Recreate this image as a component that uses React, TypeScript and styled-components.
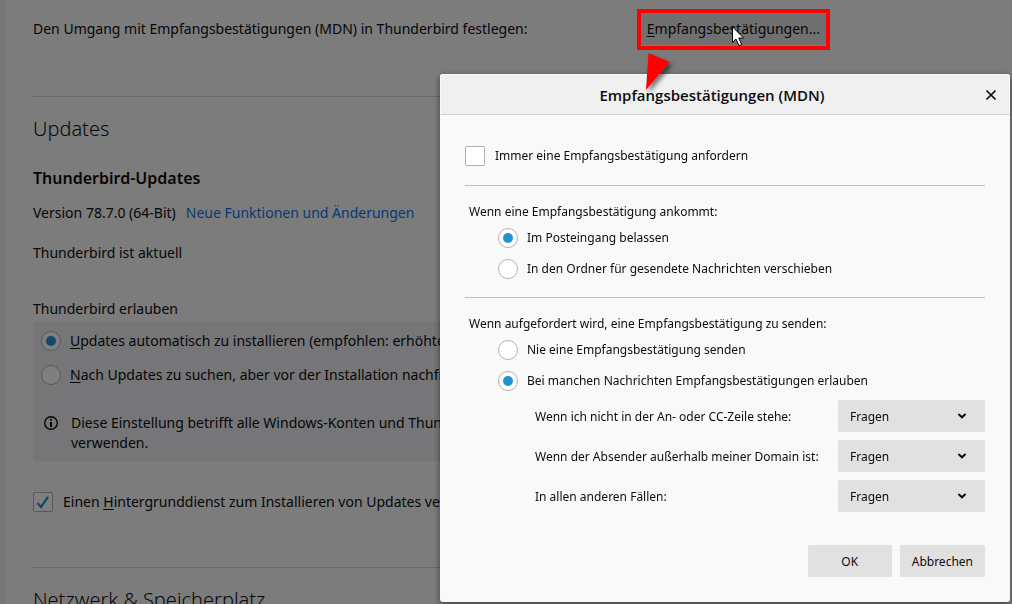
import React from 'react';
import styled, { createGlobalStyle, css } from 'styled-components';

const GlobalStyle = createGlobalStyle`
  *, *::before, *::after { box-sizing: border-box; }
  html, body, #root { height: 100%; }
  body {
    margin: 0;
    overflow: hidden;
    background: #f9f9fa;
    color: #0c0c0d;
    font-family: "Segoe UI", "Noto Sans", "Open Sans", sans-serif;
    font-size: 14px;
    line-height: 20px;
  }
  button, select, input { font: inherit; color: inherit; }
`;

const Page = styled.div`
  display: flex;
  height: 100vh;
  overflow: hidden;
`;

const SidebarEdge = styled.div`
  flex: 0 0 5px;
  background: #ededf0;
`;

const Content = styled.main`
  flex: 1;
  min-width: 0;
  max-width: 821px;
  padding: 13px 0 0 28px;
`;

const SettingRow = styled.div`
  display: flex;
  align-items: center;
  justify-content: space-between;
  margin-bottom: 51px;
`;

const Text = styled.p`
  margin: 0;
`;

const AccessKey = styled.span`
  text-decoration: underline;
  text-underline-offset: 2px;
`;

const Highlighted = styled.div`
  position: relative;
  display: flex;
`;

const HighlightFrame = styled.div`
  position: absolute;
  z-index: 3;
  inset: -4px -4px -5px -4px;
  border: 4px solid #ff0000;
  pointer-events: none;
`;

const HighlightArrow = styled.svg`
  position: absolute;
  z-index: 3;
  top: 40px;
  left: 1px;
  pointer-events: none;
`;

const MousePointer = styled.svg`
  position: absolute;
  z-index: 3;
  top: 13px;
  left: 91px;
  pointer-events: none;
`;

const PageButton = styled.button`
  height: 32px;
  padding: 0 6px;
  border: 0;
  border-radius: 2px;
  background: rgba(12, 12, 13, 0.1);
  white-space: nowrap;
`;

const Divider = styled.hr<{ $dialog?: boolean }>`
  height: 1px;
  margin: 0;
  border: 0;
  background: ${(p) => (p.$dialog ? '#bebebf' : '#d2d2d3')};
`;

const Section = styled.section`
  display: flex;
  flex-direction: column;
  padding: 18px 0 55px;
`;

const SectionTitle = styled.h1`
  margin: 0;
  font-size: 20px;
  font-weight: 300;
  line-height: 28px;
`;

const GroupTitle = styled.h2`
  margin: 24px 0 14px;
  font-size: 16px;
  font-weight: 600;
  line-height: 22px;
`;

const VersionRow = styled.div`
  display: flex;
  gap: 10px;
  margin-bottom: 20px;
`;

const Link = styled.a`
  color: #0a74e6;
  text-decoration: none;
`;

const Fieldset = styled.fieldset`
  min-width: 0;
  margin: 36px 0 0;
  padding: 0;
  border: 0;
`;

const AllowLabel = styled.legend`
  padding: 0 0 3px;
`;

const AllowPanel = styled.div`
  display: flex;
  flex-direction: column;
  padding: 9px 8px 8px;
  border-radius: 4px;
  background: #ededf0;
`;

const Choice = styled.label<{ $gap?: number; $space?: number }>`
  display: flex;
  align-items: center;
  gap: ${(p) => p.$gap ?? 9}px;
  margin-bottom: ${(p) => p.$space ?? 0}px;
  white-space: nowrap;
`;

const controlBox = css`
  appearance: none;
  flex: none;
  width: 20px;
  height: 20px;
  margin: 0;
  border: 1px solid #b1b1b1;
  background-color: #ffffff;
`;

const Radio = styled.input.attrs({ type: 'radio' })`
  ${controlBox}
  display: grid;
  place-items: center;
  border-radius: 50%;

  &:checked::before {
    content: '';
    width: 10px;
    height: 10px;
    border-radius: 50%;
    background: #2292d0;
  }
`;

const CheckWrap = styled.span`
  display: grid;
  flex: none;

  & > * { grid-area: 1 / 1; }
`;

const CheckInput = styled.input.attrs({ type: 'checkbox' })`
  ${controlBox}
  border-radius: 2px;

  & + svg { visibility: hidden; pointer-events: none; }
  &:checked + svg { visibility: visible; }
`;

const Note = styled.div`
  display: flex;
  align-items: flex-start;
  gap: 12px;
  padding-left: 2px;
`;

const NoteIcon = styled.svg`
  flex: none;
  margin-top: 2px;
`;

const BackgroundService = styled.div`
  padding-top: 31px;
`;

const Overlay = styled.div`
  position: fixed;
  z-index: 1;
  inset: 0;
  background: rgba(0, 0, 0, 0.5);
`;

const DialogLayer = styled.div`
  position: fixed;
  z-index: 2;
  inset: 0;
  display: flex;
  align-items: flex-end;
  justify-content: flex-end;
  padding: 2px;
`;

const Dialog = styled.div`
  width: 100%;
  max-width: 570px;
  border-radius: 3px;
  background: #f9f9fa;
  box-shadow: 0 2px 6px rgba(0, 0, 0, 0.5);
  font-size: 12px;
  line-height: 18px;
`;

const DialogHeader = styled.header`
  display: flex;
  align-items: center;
  height: 41px;
  padding-right: 10px;
  border: 1px solid #f9f9fa;
  border-bottom-color: #d0d0d1;
  border-radius: 3px 3px 0 0;
  background: #f0f0f0;
`;

const DialogTitle = styled.h2`
  flex: 1;
  margin: 0;
  font-family: "Segoe UI", "Open Sans", sans-serif;
  font-size: 15px;
  font-weight: 600;
  line-height: 20px;
  text-align: center;
`;

const CloseButton = styled.button`
  display: flex;
  padding: 2px;
  border: 0;
  background: transparent;
`;

const DialogBody = styled.div`
  padding: 31px 25px 25px;
`;

const DialogGroup = styled.fieldset`
  min-width: 0;
  margin: 0;
  padding: 17px 0 0;
  border: 0;
`;

const DialogLegend = styled.div`
  padding-left: 4px;
`;

const RadioList = styled.div`
  display: flex;
  flex-direction: column;
  gap: 11px;
  padding: 7px 0 0 33px;
`;

const CaseTable = styled.div`
  display: flex;
  flex-direction: column;
  gap: 8px;
  padding: 9px 0 33px 70px;
`;

const CaseRow = styled.div`
  display: flex;
  align-items: center;
  justify-content: space-between;
  gap: 8px;
`;

const CaseLabel = styled.label`
  padding-top: 2px;
`;

const SelectWrap = styled.span`
  display: grid;
  flex: 0 0 147px;
  align-items: center;

  & > * { grid-area: 1 / 1; }
  & > svg { justify-self: end; margin-right: 18px; pointer-events: none; }
`;

const Select = styled.select`
  appearance: none;
  width: 100%;
  height: 32px;
  padding: 2px 12px 0;
  border: 0;
  border-radius: 2px;
  background: #e1e1e2;
`;

const Actions = styled.footer`
  display: flex;
  justify-content: flex-end;
  gap: 8px;
`;

const DialogButton = styled.button`
  min-width: 84px;
  height: 32px;
  padding: 1px 12px 0;
  border: 0;
  border-radius: 2px;
  background: #e1e1e2;
`;

function Check({ id, defaultChecked }: { id: string; defaultChecked?: boolean }) {
  return (
    <CheckWrap>
      <CheckInput id={id} defaultChecked={defaultChecked} />
      <svg width="20" height="20" viewBox="0 0 20 20" fill="none" aria-hidden="true">
        <path d="M4.500 11l3.500 4 7-10" stroke="#2292d0" strokeWidth="2.200" />
      </svg>
    </CheckWrap>
  );
}

const cases = [
  { id: 'not-in-to-cc', label: 'Wenn ich nicht in der An- oder CC-Zeile stehe:' },
  { id: 'outside-domain', label: 'Wenn der Absender außerhalb meiner Domain ist:' },
  { id: 'other-cases', label: 'In allen anderen Fällen:' },
];

function ReceiptsDialog() {
  return (
    <DialogLayer>
      <Dialog role="dialog" aria-modal="true" aria-labelledby="receipts-title">
        <DialogHeader>
          <DialogTitle id="receipts-title">Empfangsbestätigungen (MDN)</DialogTitle>
          <CloseButton type="button" aria-label="Schließen">
            <svg width="12" height="12" viewBox="0 0 12 12" fill="none" aria-hidden="true">
              <path d="M1.500 1.500l9 9M10.500 1.500l-9 9" stroke="#0c0c0d" strokeWidth="1.700" />
            </svg>
          </CloseButton>
        </DialogHeader>
        <DialogBody>
          <Choice htmlFor="always-request" $gap={10} $space={19}>
            <Check id="always-request" />
            Immer eine Empfangsbestätigung anfordern
          </Choice>
          <Divider $dialog />
          <DialogGroup aria-labelledby="arrives-label">
            <DialogLegend id="arrives-label">Wenn eine Empfangsbestätigung ankommt:</DialogLegend>
            <RadioList>
              <Choice>
                <Radio name="arrives" defaultChecked />
                Im Posteingang belassen
              </Choice>
              <Choice $space={18}>
                <Radio name="arrives" />
                In den Ordner für gesendete Nachrichten verschieben
              </Choice>
            </RadioList>
          </DialogGroup>
          <Divider $dialog />
          <DialogGroup aria-labelledby="requested-label">
            <DialogLegend id="requested-label">
              Wenn aufgefordert wird, eine Empfangsbestätigung zu senden:
            </DialogLegend>
            <RadioList>
              <Choice>
                <Radio name="requested" />
                Nie eine Empfangsbestätigung senden
              </Choice>
              <Choice>
                <Radio name="requested" defaultChecked />
                Bei manchen Nachrichten Empfangsbestätigungen erlauben
              </Choice>
            </RadioList>
            <CaseTable>
              {cases.map((c) => (
                <CaseRow key={c.id}>
                  <CaseLabel htmlFor={c.id}>{c.label}</CaseLabel>
                  <SelectWrap>
                    <Select id={c.id} defaultValue="ask">
                      <option value="ask">Fragen</option>
                    </Select>
                    <svg width="10" height="10" viewBox="0 0 10 10" fill="none" aria-hidden="true">
                      <path d="M2 3.500L5 6.300L8 3.500" stroke="#0c0c0d" strokeWidth="2" strokeLinecap="round" />
                    </svg>
                  </SelectWrap>
                </CaseRow>
              ))}
            </CaseTable>
          </DialogGroup>
          <Actions>
            <DialogButton type="button">OK</DialogButton>
            <DialogButton type="button">Abbrechen</DialogButton>
          </Actions>
        </DialogBody>
      </Dialog>
    </DialogLayer>
  );
}

export default function App() {
  return (
    <>
      <GlobalStyle />
      <Page>
        <SidebarEdge />
        <Content>
          <SettingRow>
            <Text>Den Umgang mit Empfangsbestätigungen (MDN) in Thunderbird festlegen:</Text>
            <Highlighted>
              <PageButton type="button">
                <AccessKey>E</AccessKey>mpfangsbestätigungen...
              </PageButton>
              <HighlightArrow width="36" height="46" viewBox="0 0 36 46" aria-hidden="true">
                <defs>
                  <filter id="arrow-shadow" x="-30%" y="-30%" width="180%" height="180%">
                    <feDropShadow dx="3" dy="3" stdDeviation="2" floodOpacity="0.5" />
                  </filter>
                </defs>
                <path d="M6.500 0L27.500 9L4 37z" fill="#ff0000" filter="url(#arrow-shadow)" />
              </HighlightArrow>
              <MousePointer width="13" height="21" viewBox="0 0 13 21" aria-hidden="true">
                <path
                  d="M.5 .8V16.500L4 13L7 19.800L9.700 18.600L6.700 12H11.500z"
                  fill="#ffffff"
                  stroke="#000000"
                />
              </MousePointer>
              <HighlightFrame />
            </Highlighted>
          </SettingRow>
          <Divider />
          <Section>
            <SectionTitle>Updates</SectionTitle>
            <GroupTitle>Thunderbird-Updates</GroupTitle>
            <VersionRow>
              <Text>Version 78.7.0 (64-Bit)</Text>
              <Link href="#neue-funktionen">Neue Funktionen und Änderungen</Link>
            </VersionRow>
            <Text>Thunderbird ist aktuell</Text>
            <Fieldset>
              <AllowLabel>Thunderbird erlauben</AllowLabel>
              <AllowPanel>
                <Choice $space={14}>
                  <Radio name="update-mode" defaultChecked />
                  <span>
                    <AccessKey>U</AccessKey>pdates automatisch zu installieren (empfohlen: erhöhte Sicherheit)
                  </span>
                </Choice>
                <Choice $space={28}>
                  <Radio name="update-mode" />
                  <span>
                    <AccessKey>N</AccessKey>ach Updates zu suchen, aber vor der Installation nachfragen
                  </span>
                </Choice>
                <Note>
                  <NoteIcon width="16" height="16" viewBox="0 0 16 16" fill="none" aria-hidden="true">
                    <circle cx="8" cy="8" r="6.300" stroke="#0c0c0d" strokeWidth="1.400" />
                    <path d="M8 7v5" stroke="#0c0c0d" strokeWidth="2" />
                    <circle cx="8" cy="4.800" r="1.100" fill="#0c0c0d" />
                  </NoteIcon>
                  <Text>
                    Diese Einstellung betrifft alle Windows-Konten und Thunderbird-Profile, die diese Installation
                    <br />
                    verwenden.
                  </Text>
                </Note>
              </AllowPanel>
            </Fieldset>
            <BackgroundService>
              <Choice htmlFor="background-service" $gap={10}>
                <Check id="background-service" defaultChecked />
                <span>
                  Einen <AccessKey>H</AccessKey>intergrunddienst zum Installieren von Updates verwenden
                </span>
              </Choice>
            </BackgroundService>
          </Section>
          <Divider />
          <Section>
            <SectionTitle>Netzwerk &amp; Speicherplatz</SectionTitle>
          </Section>
        </Content>
      </Page>
      <Overlay />
      <ReceiptsDialog />
    </>
  );
}
